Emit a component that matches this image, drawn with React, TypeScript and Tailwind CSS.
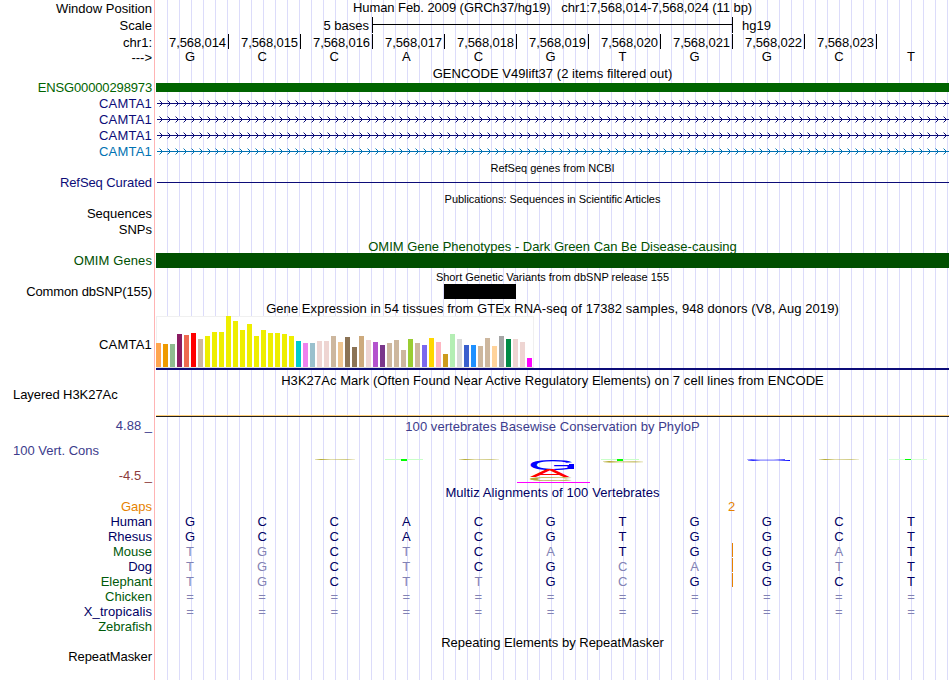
import * as React from "react";
import clsx from "clsx";

interface TrackLabel {
  text: string;
  className: string;
}

const labels: TrackLabel[] = [
  { text: "Window Position", className: "mt-px" },
  { text: "Scale", className: "mt-[2px]" },
  { text: "chr1:", className: "mt-[2px]" },
  { text: "--->", className: "" },
  {
    text: "ENSG00000298973",
    className: "mt-[15px] tracking-[-0.14px] text-[#006400]",
  },
  { text: "CAMTA1", className: "mt-px tracking-[0.2px] text-[#0c0c78]" },
  { text: "CAMTA1", className: "mt-px tracking-[0.2px] text-[#0c0c78]" },
  { text: "CAMTA1", className: "mt-px tracking-[0.2px] text-[#0c0c78]" },
  { text: "CAMTA1", className: "mt-px tracking-[0.2px] text-[#0072b2]" },
  { text: "RefSeq Curated", className: "mt-4 tracking-[-0.08px] text-[#0c0c78]" },
  { text: "Sequences", className: "mt-4" },
  { text: "SNPs", className: "mt-px" },
  { text: "OMIM Genes", className: "mt-4 tracking-[0.1px] text-[#005000]" },
  { text: "Common dbSNP(155)", className: "mt-4 tracking-[-0.12px]" },
  { text: "CAMTA1", className: "mt-[38px] tracking-[0.2px]" },
  {
    text: "Layered H3K27Ac",
    className: "mt-[35px] self-start pl-[13px] tracking-[-0.06px]",
  },
  { text: "4.88 _", className: "mt-4 text-[#3c3c8c]" },
  { text: "100 Vert. Cons", className: "mt-2.5 self-start pl-[13px] text-[#3c3c8c]" },
  { text: "-4.5 _", className: "mt-2.5 text-[#8c3c3c]" },
  { text: "Gaps", className: "mt-4 text-[#e68200]" },
  { text: "Human", className: "tracking-[-0.1px] text-[#000064]" },
  { text: "Rhesus", className: "text-[#000064]" },
  { text: "Mouse", className: "text-[#005a0a]" },
  { text: "Dog", className: "text-[#000064]" },
  { text: "Elephant", className: "text-[#005a0a]" },
  { text: "Chicken", className: "text-[#005a0a]" },
  { text: "X_tropicalis", className: "tracking-[0.08px] text-[#000064]" },
  { text: "Zebrafish", className: "tracking-[-0.04px] text-[#005a0a]" },
  { text: "RepeatMasker", className: "mt-[15px] tracking-[-0.06px]" },
];

const positions = [
  "7,568,014",
  "7,568,015",
  "7,568,016",
  "7,568,017",
  "7,568,018",
  "7,568,019",
  "7,568,020",
  "7,568,021",
  "7,568,022",
  "7,568,023",
];

const reference = "GCCACGTGGCT";

// gap marks an insertion between the 8th and 9th base
const alignments = [
  { bases: "GCCACGTGGCT", gap: false },
  { bases: "GCCACGTGGCT", gap: false },
  { bases: "TGCTCATGGAT", gap: true },
  { bases: "TGCTCGCAGTT", gap: true },
  { bases: "TGCTTGCGGCT", gap: true },
  { bases: "===========", gap: false },
  { bases: "===========", gap: false },
];

// [height, color] for each of the 54 GTEx tissues
const tissues: [number, string][] = [
  [24, "#ffa54f"],
  [23, "#ee9a00"],
  [23, "#8fbc8f"],
  [33, "#8b1c62"],
  [32, "#ee6a50"],
  [34, "#ff0000"],
  [28, "#cdb79e"],
  [31, "#eeee00"],
  [35, "#eeee00"],
  [35, "#eeee00"],
  [51, "#eeee00"],
  [46, "#eeee00"],
  [37, "#eeee00"],
  [43, "#eeee00"],
  [31, "#eeee00"],
  [37, "#eeee00"],
  [34, "#eeee00"],
  [34, "#eeee00"],
  [33, "#eeee00"],
  [31, "#eeee00"],
  [26, "#00cdcd"],
  [24, "#ee82ee"],
  [24, "#9ac0cd"],
  [26, "#eed5d2"],
  [26, "#eed5d2"],
  [31, "#cdb79e"],
  [25, "#eec591"],
  [30, "#8b7355"],
  [20, "#8b7355"],
  [31, "#cdaa7d"],
  [27, "#eed5d2"],
  [25, "#b452cd"],
  [22, "#7a378b"],
  [24, "#cdb79e"],
  [27, "#cdb79e"],
  [17, "#cdb79e"],
  [28, "#9acd32"],
  [24, "#cdb79e"],
  [22, "#7b68ee"],
  [29, "#ffd700"],
  [25, "#ffb6c1"],
  [13, "#cd9b1d"],
  [33, "#b4eeb4"],
  [28, "#d9d9d9"],
  [22, "#3a5fcd"],
  [22, "#1e90ff"],
  [21, "#cdb79e"],
  [29, "#cdb79e"],
  [21, "#ffd39b"],
  [31, "#a6a6a6"],
  [28, "#008b45"],
  [28, "#eed5d2"],
  [25, "#eed5d2"],
  [9, "#ff00ff"],
];

interface TitleProps {
  children: React.ReactNode;
  className?: string;
  small?: boolean;
}

const Title = ({ children, className, small }: TitleProps) => (
  <div
    className={clsx(
      "text-center whitespace-pre",
      small ? "h-[13px] text-[11px] leading-[13px]" : "h-[15px]",
      className,
    )}
  >
    {children}
  </div>
);

const Intron = ({ color, className }: { color: string; className?: string }) => (
  <svg
    className={clsx("block h-[7px] w-full", className)}
    viewBox="0 0 793 7"
    shapeRendering="crispEdges"
    fill={color}
  >
    <rect x="1" y="3" width="792" height="1" />
    {Array.from({ length: 99 }, (_, i) => {
      const x = 3 + i * 8;
      return (
        <g key={i}>
          <rect x={x} y="0" width="1" height="1" opacity="0.45" />
          <rect x={x + 1} y="1" width="1" height="1" />
          <rect x={x + 2} y="2" width="1" height="1" />
          <rect x={x + 2} y="4" width="1" height="1" />
          <rect x={x + 1} y="5" width="1" height="1" />
          <rect x={x} y="6" width="1" height="1" opacity="0.45" />
        </g>
      );
    })}
  </svg>
);

interface BaseRowProps {
  bases: string;
  gap?: boolean;
  compare?: boolean;
}

const BaseRow = ({ bases, gap, compare }: BaseRowProps) => (
  <div className="relative -ml-0.5 grid h-[15px] w-[793px] grid-cols-11 text-center">
    {bases.split("").map((base, i) => (
      <span
        key={i}
        className={clsx(
          compare && (base === reference[i] ? "text-[#000064]" : "text-[#8282b4]"),
        )}
      >
        {base}
      </span>
    ))}
    {gap && (
      <span className="absolute -top-px left-[578px] h-3.5 w-px bg-[#e68200]" />
    )}
  </div>
);

const Expression = () => (
  <div className="h-[52px] w-[378px] border border-b-[#dcdcdc] border-[#f0f0f0] bg-white">
    <div className="-mt-px -ml-px flex h-[51px] items-end gap-[2px]">
      {tissues.map(([height, color], i) => (
        <div
          key={i}
          className="w-[5px] shrink-0"
          style={{ height, backgroundColor: color }}
        />
      ))}
    </div>
  </div>
);

// Sequence logo scaled by phyloP score; only the 6th base has a tall stack
const ConservationLogo = () => (
  <svg className="block h-[30px] w-full" viewBox="156 455 793 30">
    <defs>
      <linearGradient id="gold" x1="0" x2="1">
        <stop offset="0" stopColor="#b4aa32" stopOpacity="0.3" />
        <stop offset="0.15" stopColor="#b4aa32" />
        <stop offset="0.4" stopColor="#b4aa32" stopOpacity="0.4" />
        <stop offset="0.8" stopColor="#b4aa32" stopOpacity="0.6" />
        <stop offset="1" stopColor="#b4aa32" stopOpacity="0.2" />
      </linearGradient>
      <linearGradient id="blue" x1="0" x2="1">
        <stop offset="0" stopColor="#0000ff" stopOpacity="0.4" />
        <stop offset="0.12" stopColor="#0000ff" stopOpacity="0.85" />
        <stop offset="0.3" stopColor="#0000ff" stopOpacity="0.35" />
        <stop offset="0.7" stopColor="#0000ff" stopOpacity="0.35" />
        <stop offset="1" stopColor="#0000ff" />
      </linearGradient>
    </defs>
    <g shapeRendering="crispEdges">
      <rect x="315" y="459" width="40" height="1" fill="url(#gold)" />
      <rect x="459" y="459" width="40" height="1" fill="url(#gold)" />
      <rect x="819" y="459" width="40" height="1" fill="url(#gold)" />
      <rect x="385" y="459" width="38" height="1" fill="#c8ffc8" />
      <rect x="401" y="459" width="6" height="2" fill="#00ff00" />
      <rect x="601" y="459" width="38" height="1" fill="#c8ffc8" />
      <rect x="617" y="459" width="6" height="2" fill="#00ff00" />
      <rect x="603" y="461" width="40" height="1" fill="url(#gold)" />
      <rect x="604" y="462" width="39" height="1" fill="url(#gold)" opacity="0.6" />
      <rect x="889" y="459" width="38" height="1" fill="#d8ffd8" />
      <rect x="905" y="459" width="6" height="1" fill="#00ff00" />
      <rect x="747" y="459" width="38" height="1" fill="url(#blue)" opacity="0.7" />
      <rect x="748" y="460" width="42" height="1" fill="url(#blue)" />
      <rect x="517" y="482" width="73" height="1" fill="#ff00ff" />
    </g>
    <g fontFamily="Liberation Sans" fontSize="10">
      <text transform="translate(527.3 469.5) scale(6.5 1.52)" fill="#0000ff">
        G
      </text>
      <rect x="569" y="464" width="5" height="5" fill="#0000ff" />
      <text transform="translate(530 477) scale(5.95 1)" fill="#ff0000">
        A
      </text>
      <text
        transform="translate(527.6 480.9) scale(6.4 0.56)"
        fill="#b4aa32"
        stroke="#b4aa32"
        strokeWidth="0.25"
      >
        C
      </text>
    </g>
  </svg>
);

const App = () => {
  return (
    <div className="flex h-[680px] w-[950px] overflow-hidden bg-white font-['Liberation_Sans',Arial,sans-serif] text-[13px] leading-[15px] text-black">
      <div className="flex w-[155px] shrink-0 flex-col items-end border-r border-[#ffb4b4] pr-[2px]">
        {labels.map((label, i) => (
          <div key={i} className={clsx("h-[15px] whitespace-pre", label.className)}>
            {label.text}
          </div>
        ))}
      </div>

      <div className="ml-px flex w-[793px] shrink-0 flex-col bg-[linear-gradient(to_right,#dcdcfa_1px,transparent_1px)] bg-[length:12px_100%] bg-[position:11px_0]">
        <Title className="tracking-[-0.06px]">
          Human Feb. 2009 (GRCh37/hg19)   chr1:7,568,014-7,568,024 (11 bp)
        </Title>

        <div className="mt-[2px] flex h-4 items-center">
          <span className="w-[213px] text-right">5 bases</span>
          <div className="ml-[3px] flex h-full w-[361px] items-center border-x border-black">
            <div className="-mt-px h-px w-full bg-black" />
          </div>
          <span className="ml-[9px]">hg19</span>
        </div>
        <div className="mt-px ml-px flex h-[15px]">
          {positions.map((position) => (
            <div
              key={position}
              className="w-[72px] border-r border-black pt-px pr-[2px] text-right tracking-[-0.1px]"
            >
              {position}
            </div>
          ))}
        </div>
        <BaseRow bases={reference} />

        <Title className="mt-[2px] tracking-[0.03px]">
          GENCODE V49lift37 (2 items filtered out)
        </Title>
        <div className="mt-[2px] h-[9px] bg-[#006400]" />
        <Intron className="mt-2" color="#0c0c78" />
        <Intron className="mt-[9px]" color="#0c0c78" />
        <Intron className="mt-[9px]" color="#0c0c78" />
        <Intron className="mt-[9px]" color="#0072b2" />

        <Title small className="mt-[7px]">
          RefSeq genes from NCBI
        </Title>
        <div className="mt-[7px] ml-px h-px bg-[#0c0c78]" />

        <Title small className="mt-2.5 tracking-[-0.04px]">
          Publications: Sequences in Scientific Articles
        </Title>

        <Title className="mt-[33px] text-[#005000]">
          OMIM Gene Phenotypes - Dark Green Can Be Disease-causing
        </Title>
        <div className="-mt-px h-[15px] bg-[#005000]" />

        <Title small className="mt-[3px]">
          Short Genetic Variants from dbSNP release 155
        </Title>
        <div className="ml-[288px] h-[15px] w-[72px] bg-black" />

        <Title className="mt-[2px] tracking-[0.06px]">
          Gene Expression in 54 tissues from GTEx RNA-seq of 17382 samples, 948 donors (V8,
          Aug 2019)
        </Title>
        <Expression />
        <div className="h-[2px] bg-[#0c0c78]" />

        <Title className="mt-[3px] tracking-[0.06px]">
          H3K27Ac Mark (Often Found Near Active Regulatory Elements) on 7 cell lines from
          ENCODE
        </Title>
        <div className="mt-[27px] h-[2px] border-t border-[#ffcf78] bg-[#202020]" />

        <Title className="mt-[2px] tracking-[0.05px] text-[#3c3c8c]">
          100 vertebrates Basewise Conservation by PhyloP
        </Title>
        <div className="mt-[21px]">
          <ConservationLogo />
        </div>

        <Title className="tracking-[0.09px] text-[#000064]">
          Multiz Alignments of 100 Vertebrates
        </Title>
        <div className="-mt-px ml-[572px] h-[15px] text-[#e68200]">2</div>
        {alignments.map((row, i) => (
          <BaseRow key={i} bases={row.bases} gap={row.gap} compare />
        ))}

        <Title className="mt-4">Repeating Elements by RepeatMasker</Title>
      </div>
    </div>
  );
};

export default App;
